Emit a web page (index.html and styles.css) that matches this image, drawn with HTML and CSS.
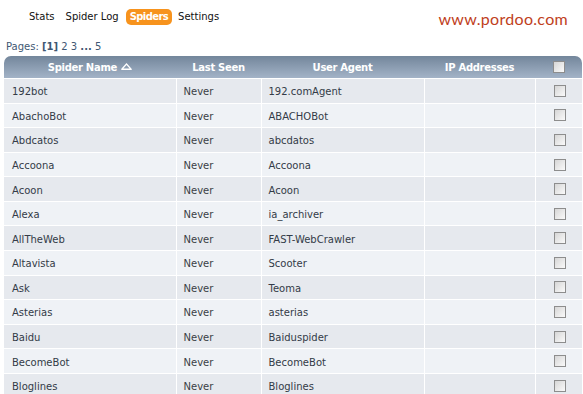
FILE: index.html
```html
<!DOCTYPE html>
<html>
<head>
<meta charset="utf-8">
<link rel="stylesheet" href="styles.css">
</head>
<body>
<div class="top">
  <nav class="nav">
    <a class="nav-item">Stats</a>
    <a class="nav-item">Spider Log</a>
    <a class="nav-item active">Spiders</a>
    <a class="nav-item">Settings</a>
  </nav>
  <div class="logo">www.pordoo.com</div>
</div>
<div class="pages">Pages: <b>[1]</b> 2 3 <b>...</b> 5</div>
<table class="grid">
  <colgroup>
    <col class="c1"><col class="c2"><col class="c3"><col class="c4"><col class="c5">
  </colgroup>
  <thead>
    <tr>
      <th class="first">Spider Name <svg class="sort" width="11" height="7" viewBox="0 0 11 7"><path d="M1 6 L5.5 1 L10 6 Z" fill="none" stroke="#fff" stroke-width="1.2"/><path d="M0.5 6.5 H10.5" stroke="#fff" stroke-width="1"/></svg></th>
      <th>Last Seen</th>
      <th>User Agent</th>
      <th>IP Addresses</th>
      <th class="last"><span class="cb"></span></th>
    </tr>
  </thead>
  <tbody>
    <tr><td>192bot</td><td class="muted">Never</td><td>192.comAgent</td><td></td><td class="chk"><span class="cb"></span></td></tr>
    <tr><td>AbachoBot</td><td class="muted">Never</td><td>ABACHOBot</td><td></td><td class="chk"><span class="cb"></span></td></tr>
    <tr><td>Abdcatos</td><td class="muted">Never</td><td>abcdatos</td><td></td><td class="chk"><span class="cb"></span></td></tr>
    <tr><td>Accoona</td><td class="muted">Never</td><td>Accoona</td><td></td><td class="chk"><span class="cb"></span></td></tr>
    <tr><td>Acoon</td><td class="muted">Never</td><td>Acoon</td><td></td><td class="chk"><span class="cb"></span></td></tr>
    <tr><td>Alexa</td><td class="muted">Never</td><td>ia_archiver</td><td></td><td class="chk"><span class="cb"></span></td></tr>
    <tr><td>AllTheWeb</td><td class="muted">Never</td><td>FAST-WebCrawler</td><td></td><td class="chk"><span class="cb"></span></td></tr>
    <tr><td>Altavista</td><td class="muted">Never</td><td>Scooter</td><td></td><td class="chk"><span class="cb"></span></td></tr>
    <tr><td>Ask</td><td class="muted">Never</td><td>Teoma</td><td></td><td class="chk"><span class="cb"></span></td></tr>
    <tr><td>Asterias</td><td class="muted">Never</td><td>asterias</td><td></td><td class="chk"><span class="cb"></span></td></tr>
    <tr><td>Baidu</td><td class="muted">Never</td><td>Baiduspider</td><td></td><td class="chk"><span class="cb"></span></td></tr>
    <tr><td>BecomeBot</td><td class="muted">Never</td><td>BecomeBot</td><td></td><td class="chk"><span class="cb"></span></td></tr>
    <tr><td>Bloglines</td><td class="muted">Never</td><td>Bloglines</td><td></td><td class="chk"><span class="cb"></span></td></tr>
  </tbody>
</table>
</body>
</html>
```
FILE: styles.css
```css
html, body {
  margin: 0;
  padding: 0;
  background: #fff;
}
body {
  font-family: "DejaVu Sans", Verdana, sans-serif;
  font-size: 10px;
  color: #333b47;
  overflow: hidden;
}
.top {
  display: flex;
  justify-content: space-between;
  align-items: center;
  height: 33px;
  padding: 0 15px 0 24px;
}
.nav {
  display: flex;
  align-items: center;
  margin-top: 0;
}
.nav-item {
  color: #111;
  padding: 2px 5px 3px;
  line-height: 11px;
  border-radius: 5px;
  margin-right: 1px;
}
.nav-item.active {
  background: #f7931d;
  color: #fff;
  font-weight: bold;
  letter-spacing: -0.6px;
  padding: 2px 4px 3px 4px;
  margin: 0 1px 0 1px;
}
.logo {
  font-family: "Lato", "Open Sans", sans-serif;
  font-size: 16px;
  color: #c0401c;
  letter-spacing: 0.3px;
  margin-top: 3px;
}
.pages {
  color: #3f5873;
  padding: 8px 0 0 6px;
  height: 15px;
  line-height: 12px;
  font-size: 10px;
}
.grid {
  margin-left: 4px;
  width: 578px;
  border-collapse: collapse;
  table-layout: fixed;
}
.c1 { width: 172px; }
.c2 { width: 85px; }
.c3 { width: 163px; }
.c4 { width: 111px; }
.c5 { width: 47px; }
.grid th {
  background: linear-gradient(#73869b, #a3b3c7);
  color: #fff;
  font-weight: bold;
  letter-spacing: -0.3px;
  height: 22px;
  padding: 0;
  text-align: center;
  border-bottom: 1px solid #fff;
  vertical-align: middle;
}
.grid th.first { border-top-left-radius: 7px; }
.grid th.last { border-top-right-radius: 7px; }
.sort {
  vertical-align: 1px;
  margin-left: 1px;
}
.grid td {
  height: 21.58px;
  padding: 2px 0 0 7px;
  border: 1px solid #fff;
  border-top: 0;
  white-space: nowrap;
  vertical-align: middle;
}
.grid td:first-child {
  padding-left: 8px;
  border-left: 0;
}
.grid td:last-child {
  border-right: 0;
}
.grid tbody tr:nth-child(odd) td { background: #e6e9ee; }
.grid tbody tr:nth-child(even) td { background: #eff2f6; }
.grid td.muted { color: #3b3f45; }
.grid td.chk {
  text-align: center;
  padding: 0 0 0 2px;
}
.cb {
  display: inline-block;
  width: 10px;
  height: 10px;
  border: 1px solid #8d8d8d;
  background: linear-gradient(135deg, #d6d6d6, #fafafa);
  vertical-align: middle;
}
```
